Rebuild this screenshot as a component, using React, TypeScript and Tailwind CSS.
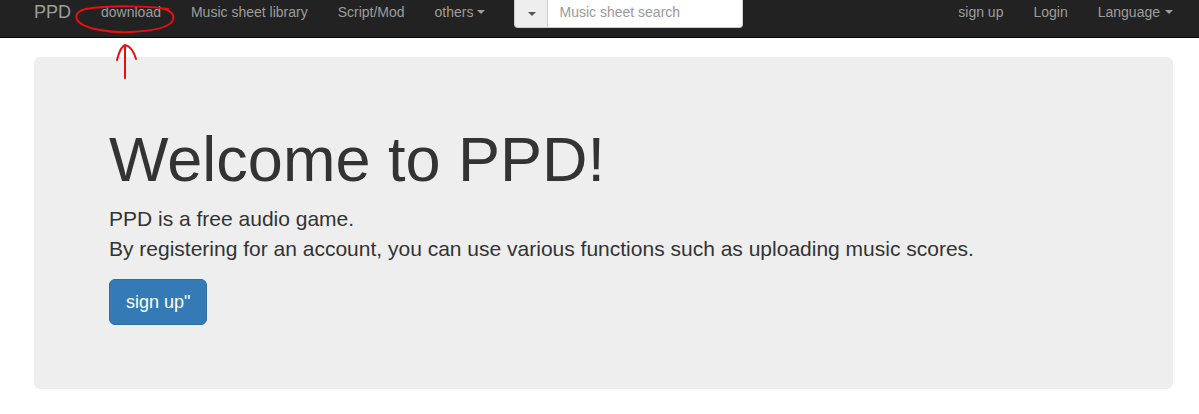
const FONT = "font-['Liberation_Sans',Arial,Helvetica,sans-serif]";

function Caret({ className = "" }: { className?: string }) {
  return (
    <span
      className={`ml-[3px] inline-block h-0 w-0 border-x-[4px] border-t-[4px] border-x-transparent align-middle ${className}`}
    />
  );
}

const LEFT_LINKS = ["download", "Music sheet library", "Script/Mod"];

export default function App() {
  return (
    <div className={`relative min-h-[414px] bg-white text-[14px] text-[#333] ${FONT}`}>
      {/* navbar */}
      <nav className="flex h-[38px] items-start border-b border-[#080808] bg-[#222] pl-[19px] pr-[11px]">
        <a className="px-[15px] pt-[2px] text-[18px] leading-[20px] text-[#9d9d9d]">PPD</a>
        {LEFT_LINKS.map((l) => (
          <a key={l} className="px-[15px] pt-[2px] leading-[20px] text-[#9d9d9d]">
            {l}
          </a>
        ))}
        <a className="flex items-center px-[15px] pt-[2px] leading-[20px] text-[#9d9d9d]">
          others
          <Caret className="border-t-[#9d9d9d]" />
        </a>

        {/* search */}
        <div className="ml-[14px] flex h-[28px] w-[229px]">
          <button className="flex w-[34px] items-center justify-center rounded-bl-[4px] border border-t-0 border-[#ccc] bg-[#eee]">
            <Caret className="ml-0 border-t-[#555]" />
          </button>
          <div className="flex flex-1 items-center rounded-br-[4px] border border-l-0 border-t-0 border-[#ccc] bg-white pl-[12px] pb-[3px] text-[#999]">
            Music sheet search
          </div>
        </div>

        <div className="ml-auto flex">
          <a className="px-[15px] pt-[2px] leading-[20px] text-[#9d9d9d]">sign up</a>
          <a className="px-[15px] pt-[2px] leading-[20px] text-[#9d9d9d]">Login</a>
          <a className="flex items-center px-[15px] pt-[2px] leading-[20px] text-[#9d9d9d]">
            Language
            <Caret className="ml-[5px] border-t-[#9d9d9d]" />
          </a>
        </div>
      </nav>

      {/* jumbotron */}
      <div className="ml-[34px] mt-[19px] w-[1139px] rounded-[6px] bg-[#eee] px-[75px] pb-[48px] pt-[48px]">
        <h1 className="mb-[10px] mt-[20px] text-[63px] font-normal leading-[1.1] text-[#333]">
          Welcome to PPD!
        </h1>
        <p className="mb-[16px] text-[21px] leading-[1.4] text-[#333]">
          PPD is a free audio game.
          <br />
          By registering for an account, you can use various functions such as uploading music scores.
        </p>
        <p className="mb-[16px]">
          <button className="h-[46px] rounded-[6px] border border-[#2e6da4] bg-[#337ab7] px-[16px] text-[18px] leading-[24px] text-white">
            sign up&quot;
          </button>
        </p>
      </div>

      {/* red hand-drawn annotation */}
      <svg
        className="pointer-events-none absolute left-0 top-0"
        width="200"
        height="90"
        viewBox="0 0 200 90"
        fill="none"
        stroke="#e8100e"
        strokeWidth="2"
        strokeLinecap="round"
      >
        <path d="M168 9 C150 6 110 5 86 9 C76 11 74 17 79 22 C86 29 110 33 130 32 C152 31 170 28 173 20 C175 14 170 10 160 8" />
        <path d="M125 78 L125 46" />
        <path d="M117 60 C119 52 122 46 125 45 C130 46 134 52 136 59" />
      </svg>
    </div>
  );
}
